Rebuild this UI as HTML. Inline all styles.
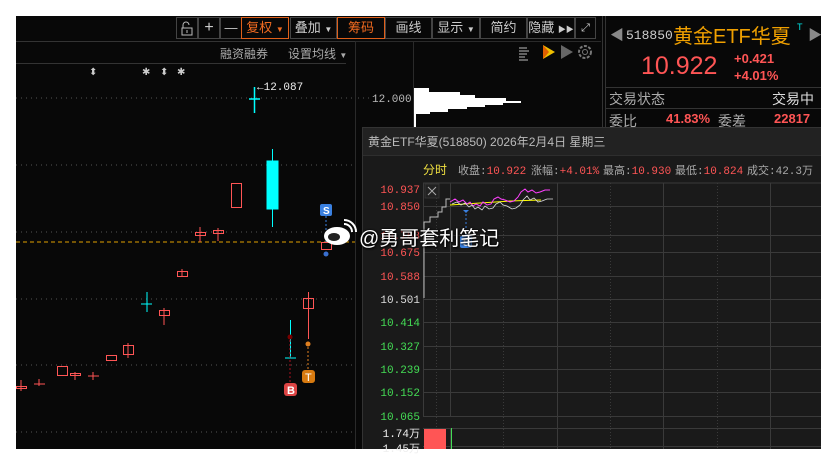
<!DOCTYPE html>
<html><head><meta charset="utf-8"><style>
*{margin:0;padding:0;box-sizing:border-box}
body{width:837px;height:465px;background:#fff;position:relative;overflow:hidden;font-family:"Liberation Sans","Noto Sans CJK SC",sans-serif}
.a{position:absolute}
.btn{position:absolute;top:17px;height:22px;border:1px solid #444;color:#ccc;font-size:13px;line-height:20px;text-align:center}
.mono{font-family:"Liberation Mono","Noto Sans CJK SC",monospace}
.h{position:absolute;top:162px;font-size:11px;color:#aaa;white-space:pre;font-family:"Liberation Mono","Noto Sans CJK SC",monospace}
.h b{color:#ff5555;font-weight:normal}
</style></head><body>
<div class="a" style="left:16px;top:16px;width:805px;height:433px;background:#080808"></div>
<!-- toolbar -->
<div class="btn" style="left:176px;width:22px"><svg width="20" height="20"><path d="M6 10V7a3 3 0 0 1 6 0" stroke="#bbb" fill="none"/><rect x="5" y="10" width="10" height="7" stroke="#bbb" fill="none"/><path d="M10 12v3" stroke="#bbb"/></svg></div>
<div class="btn" style="left:198px;width:22px;font-size:16px">+</div>
<div class="btn" style="left:220px;width:22px">—</div>
<div class="btn" style="left:241px;width:48px;border-color:#e0601a;color:#f06a20">复权 <span style="font-size:8px">▼</span></div>
<div class="btn" style="left:290px;width:47px">叠加 <span style="font-size:8px">▼</span></div>
<div class="btn" style="left:337px;width:48px;border-color:#e0601a;color:#f06a20">筹码</div>
<div class="btn" style="left:385px;width:47px">画线</div>
<div class="btn" style="left:432px;width:48px">显示 <span style="font-size:8px">▼</span></div>
<div class="btn" style="left:480px;width:47px">简约</div>
<div class="btn" style="left:527px;width:48px">隐藏 <span style="font-size:8px">▶▶</span></div>
<div class="btn" style="left:575px;width:21px;font-size:11px">⤢</div>
<div class="a" style="left:16px;top:41px;width:340px;height:1px;background:#333"></div>
<div class="a" style="left:16px;top:63px;width:330px;height:1px;background:#333"></div>
<div class="a" style="left:220px;top:45px;color:#aaa;font-size:12px">融资融券</div>
<div class="a" style="left:288px;top:45px;color:#aaa;font-size:12px">设置均线 <span style="font-size:8px">▼</span></div>
<div class="a" style="left:355px;top:41px;width:1px;height:408px;background:#2a2a2a"></div>
<div class="a" style="left:413px;top:41px;width:1px;height:90px;background:#2a2a2a"></div>
<div class="a" style="left:355px;top:41px;width:246px;height:1px;background:#2a2a2a"></div>
<div class="a" style="left:602px;top:16px;width:1px;height:115px;background:#333"></div>
<div class="a" style="left:605px;top:16px;width:1px;height:115px;background:#333"></div>
<svg class="a" style="left:0;top:0" width="837" height="465">
<g stroke="#555" stroke-dasharray="1 4"><path d="M16 98H355M16 165H355M16 232H355M16 299H355M16 365H355M16 432H355M358 98H372"/></g>
<path d="M16 242H355" stroke="#e0a000" stroke-dasharray="4 3"/>
<g fill="#ccc" font-size="10"><text x="89" y="75">⬍</text><text x="142" y="75">✱</text><text x="160" y="75">⬍</text><text x="177" y="75">✱</text></g>
<g stroke="#ff5555" fill="none">
<rect x="231.5" y="183.5" width="10" height="24"/>
<path d="M200 227v15M195.5 232.5h10v3h-10z M218 228v13M213.5 230.5h10v3h-10z"/>
<path d="M21 380v11M16.5 386.5h10v2h-10z M39 379v7M34 384h11 M57.5 366.5h10v9h-10z M75 372v8M70.5 373.5h10v2h-10z M93 372v8M88 376h11 M106.5 355.5h10v5h-10z M128 343v15M123.5 345.5h10v9h-10z M164 308v17M159.5 310.5h10v5h-10z M182 269v8M177.5 271.5h10v5h-10z"/>
<path d="M308.5 292v47M303.5 298.5h10v10h-10z"/>
<rect x="321.5" y="242.5" width="10" height="7"/>
</g>
<g stroke="#00ffff" fill="#00ffff"><path d="M254.5 87v26M249 99h11" stroke-width="1.5"/><path d="M272.5 149v78"/><rect x="267" y="161" width="11" height="48"/><path d="M147 292v20M141 304h11M290.5 320v38M285 358h11"/></g>
<text x="257" y="90" fill="#eee" font-size="11" class="mono">←12.087</text>
<path d="M290 340v42" stroke="#aa1020" stroke-dasharray="2 2"/><circle cx="290" cy="337" r="2.5" fill="#700"/>
<rect x="284" y="383" width="13" height="13" rx="3" fill="#d44"/><text x="287" y="394" fill="#fff" font-size="11" font-weight="bold">B</text>
<path d="M308 347v23" stroke="#e08020" stroke-dasharray="2 2"/><circle cx="308" cy="344" r="2.5" fill="#e08020"/>
<rect x="302" y="370" width="13" height="13" rx="3" fill="#d77a10"/><text x="305" y="381" fill="#fff" font-size="11">T</text>
<rect x="320" y="204" width="12" height="12" rx="2" fill="#3a80e0"/><text x="323" y="214" fill="#fff" font-size="10" font-weight="bold">S</text>
<path d="M326 216v26" stroke="#3a80e0" stroke-dasharray="2 2"/><circle cx="326" cy="254" r="2.5" fill="#3a70d0"/>
<text x="372" y="102" fill="#bbb" font-size="11" class="mono">12.000</text>
<path d="M414 88H429V92H460V95H475V98H506V101H521V103H503V105H485V107H467V109H448V112H430V114H416V131H414Z" fill="#fff"/>
<path d="M519 48h8M519 51h10M519 54h8M519 57h6M519 60h9" stroke="#bbb"/>
<path d="M543 45l12 7-12 7z" fill="#f0c000"/><path d="M543 45l6 7-6 7z" fill="#e06000"/>
<path d="M561 45l12 7-12 7z" fill="#666"/>
<circle cx="585" cy="52" r="6" stroke="#777" stroke-width="2" fill="none" stroke-dasharray="3 1.5"/><circle cx="585" cy="52" r="2.5" stroke="#777" fill="none"/>
</svg>
<div class="a" style="left:610px;top:25px;color:#888;font-size:14px">◀</div>
<div class="a mono" style="left:626px;top:28px;color:#ccc;font-size:13px">518850</div>
<div class="a" style="left:673px;top:20px;color:#f0a000;font-size:20px">黄金ETF华夏</div>
<div class="a" style="left:797px;top:22px;color:#00e0e0;font-size:9px">T</div>
<div class="a" style="left:808px;top:25px;color:#888;font-size:14px">▶</div>
<div class="a" style="left:641px;top:52px;color:#ff5555;font-size:25px">10.922</div>
<div class="a" style="left:734px;top:50px;color:#ff5555;font-size:13px;font-weight:bold;line-height:17px">+0.421<br>+4.01%</div>
<div class="a" style="left:605px;top:87px;width:216px;height:1px;background:#333"></div>
<div class="a" style="left:609px;top:89px;color:#aaa;font-size:14px">交易状态</div>
<div class="a" style="left:772px;top:89px;color:#ddd;font-size:14px">交易中</div>
<div class="a" style="left:605px;top:108px;width:216px;height:1px;background:#333"></div>
<div class="a" style="left:609px;top:111px;color:#aaa;font-size:14px">委比</div>
<div class="a" style="left:666px;top:111px;color:#ff5555;font-size:13px;font-weight:bold">41.83%</div>
<div class="a" style="left:718px;top:111px;color:#aaa;font-size:14px">委差</div>
<div class="a" style="left:774px;top:111px;color:#ff5555;font-size:13px;font-weight:bold">22817</div>
<!-- popup -->
<div class="a" style="left:362px;top:127px;width:459px;height:322px;background:#1a1a1a;border-left:1px solid #333;border-top:1px solid #333"></div>
<div class="a" style="left:363px;top:128px;width:458px;height:28px;background:#222;border-bottom:1px solid #2e2e2e"></div>
<div class="a" style="left:368px;top:133px;color:#bbb;font-size:12px">黄金ETF华夏(518850) 2026年2月4日 星期三</div>
<div class="h" style="left:423px;color:#f0e040;font-size:12px;top:161px">分时</div>
<div class="h" style="left:458px">收盘:<b>10.922</b></div>
<div class="h" style="left:531px">涨幅:<b>+4.01%</b></div>
<div class="h" style="left:603px">最高:<b>10.930</b></div>
<div class="h" style="left:675px">最低:<b>10.824</b></div>
<div class="h" style="left:747px">成交:42.3万</div>
<svg class="a" style="left:0;top:0" width="837" height="465">
<g stroke="#3a3a3a"><path d="M423.5 183V416M423 183H821M423 416.5H821M423 428.5H821M423 446.5H821M450.5 183V416M557.5 183V449M663.5 183V449M770.5 183V449M450.5 428V449"/>
<path d="M423 206.5H821M423 235.5H821M423 252.5H821M423 276.5H821M423 299.5H821M423 322.5H821M423 346.5H821M423 369.5H821M423 392.5H821"/></g>
<g stroke="#3a3a3a" stroke-dasharray="1 2"><path d="M436.5 183V449M503.5 183V449M610.5 183V449M717.5 183V449"/></g>
<g font-size="11" class="mono" text-anchor="end">
<text x="420" y="193" fill="#ff5555">10.937</text><text x="420" y="210" fill="#ff5555">10.850</text><text x="420" y="239" fill="#ff5555">10.763</text><text x="420" y="256" fill="#ff5555">10.675</text><text x="420" y="280" fill="#ff5555">10.588</text><text x="420" y="303" fill="#ddd">10.501</text>
<text x="420" y="326" fill="#44dd55">10.414</text><text x="420" y="350" fill="#44dd55">10.327</text><text x="420" y="373" fill="#44dd55">10.239</text><text x="420" y="396" fill="#44dd55">10.152</text><text x="420" y="420" fill="#44dd55">10.065</text>
<text x="420" y="437" fill="#eee">1.74万</text><text x="420" y="452" fill="#eee">1.45万</text></g>
<rect x="425" y="184" width="14" height="14" fill="#222" stroke="#333"/><path d="M428 187l8 8M436 187l-8 8" stroke="#aaa"/>
<path d="M424 298V222h6v-5h8v-5h4v-5h4v-8h4" stroke="#bbb" fill="none"/>
<path d="M450 205L480 203L510 201L541 200" stroke="#ffff00" fill="none"/>
<path d="M450 202l5-3 4 3 4-2 4 4 3-2 3 4 3-2 4 2 3-4 4 3 4-1 3-5 4-2 3 2 4 1 5 2 4-1 4-4 3-5 4-3 3 3 4-2 4 3 4-1 5-2h5" stroke="#ff40ff" fill="none"/>
<path d="M452 204l5-2 4 3 4-2 4 4 3-2 3 4 3-2 4 3 3-4 4 3 4-1 3-4 4-2 3 3 4 1 5 3 4-1 4-3 3-5 4-4 3 4 4-2 4 4 4-1 5-2h6" stroke="#ddd" fill="none" stroke-width="0.8"/>
<path d="M466 213l-3 -3h6z" fill="#3a80e0"/><path d="M466 214v22" stroke="#3a80e0" stroke-dasharray="2 2"/>
<rect x="460" y="236" width="12" height="12" rx="2" fill="#3a80e0"/><text x="463" y="246" fill="#fff" font-size="10" font-weight="bold">S</text>
<path d="M424 429h22v20h-22z" fill="#ff5555"/><path d="M451.5 428v21" stroke="#44dd55"/>
<ellipse cx="337" cy="236" rx="13" ry="9" fill="#fff"/><ellipse cx="334" cy="237" rx="6" ry="4" fill="#222"/><path d="M344 224a8 8 0 0 1 8 8M344 220a12 12 0 0 1 12 12" stroke="#fff" stroke-width="2" fill="none"/>
</svg>
<div class="a" style="left:359px;top:222px;color:#fff;font-size:20px;text-shadow:0 0 2px #000,1px 1px 2px #000">@勇哥套利笔记</div>
</body></html>
